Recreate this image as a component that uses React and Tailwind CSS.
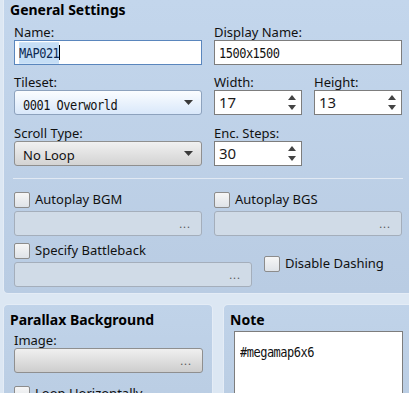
import React from "react";

const mono =
  "inline-block scale-y-[1.2] font-['DejaVu_Sans_Mono',monospace] text-[12px] tracking-[-0.5px]";

function Label({ children }) {
  return <div className="h-[16px] leading-[16px] text-[13px] text-[#111]">{children}</div>;
}

function TextInput({ children, focused }) {
  return (
    <div
      className={`h-[25px] bg-white border flex items-center px-[4px] ${
        focused ? "border-[#5a86bd]" : "border-[#7d7d7d]"
      }`}
    >
      {children}
    </div>
  );
}

function Combo({ children, blue }) {
  return (
    <div
      className={`h-[25px] rounded-[3px] border flex items-center pl-[8px] pr-[8px] ${
        blue
          ? "border-[#8da2bd] bg-gradient-to-b from-[#fbfdff] to-[#d9e8fa]"
          : "border-[#8f8f8f] bg-gradient-to-b from-[#f1f1f1] to-[#d3d3d3]"
      }`}
    >
      <div className="flex-1">{children}</div>
      <svg width="9" height="5" viewBox="0 0 9 5">
        <path d="M0 0H9L4.5 5Z" fill="#3a3a3a" />
      </svg>
    </div>
  );
}

function Spinner({ value }) {
  return (
    <div className="h-[25px] bg-white border border-[#7d7d7d] flex items-center pl-[4px] pr-[5px]">
      <div className="flex-1 text-[15px] text-[#1a1a1a] font-['Noto_Sans',sans-serif]">{value}</div>
      <div className="flex flex-col gap-[5px]">
        <svg width="8" height="5" viewBox="0 0 8 5">
          <path d="M4 0L8 5H0Z" fill="#444" />
        </svg>
        <svg width="8" height="5" viewBox="0 0 8 5">
          <path d="M0 0H8L4 5Z" fill="#444" />
        </svg>
      </div>
    </div>
  );
}

function DotsField({ gray }) {
  return (
    <div
      className={`h-[25px] rounded-[3px] border flex items-center justify-end pr-[10px] ${
        gray
          ? "border-[#8f8f8f] bg-gradient-to-b from-[#f0f0f0] to-[#cdcdcd]"
          : "border-[#a4aebb] bg-[#d0dbe7]"
      }`}
    >
      <span className="text-[11px] tracking-[1px] text-[#555] leading-none">...</span>
    </div>
  );
}

function Check({ label }) {
  return (
    <div className="flex items-center gap-[5px] h-[16px]">
      <div className="w-[16px] h-[16px] shrink-0 rounded-[2px] border border-[#8c8c8c] bg-gradient-to-b from-[#f6f6f6] to-[#dfe3e8]" />
      <span className="text-[13px] text-[#111] whitespace-nowrap">{label}</span>
    </div>
  );
}

export default function App() {
  return (
    <div className="w-[409px] h-[393px] overflow-hidden bg-[#dce7f3] font-['Noto_Sans',sans-serif]">
      {/* General Settings */}
      <div className="ml-[3px] w-[420px] h-[294px] border border-t-0 border-[#e4ecf6] rounded-b-[5px] bg-gradient-to-b from-[#c3d6ec] to-[#b9cce3]">
        <div className="pl-[6px] h-[20px] leading-[20px] text-[14px] font-bold text-black">General Settings</div>
        <div className="pl-[10px] pt-[4px] w-[398px]">
          <div className="grid grid-cols-[188px_188px] gap-x-[12px]">
            <div>
              <Label>Name:</Label>
              <TextInput focused>
                <span className={`${mono} bg-[#c5def6] text-[#0d2a52]`}>MAP021</span>
                <span className="w-[1px] h-[15px] bg-black" />
              </TextInput>
            </div>
            <div>
              <Label>Display Name:</Label>
              <TextInput>
                <span className={`${mono} text-[#111]`}>1500x1500</span>
              </TextInput>
            </div>

            <div className="mt-[9px]">
              <Label>Tileset:</Label>
              <Combo blue>
                <span className={`${mono} text-[#111]`}>0001 Overworld</span>
              </Combo>
            </div>
            <div className="mt-[9px] flex gap-[12px]">
              <div className="w-[88px]">
                <Label>Width:</Label>
                <Spinner value="17" />
              </div>
              <div className="w-[88px]">
                <Label>Height:</Label>
                <Spinner value="13" />
              </div>
            </div>

            <div className="mt-[10px]">
              <Label>Scroll Type:</Label>
              <Combo>
                <span className="text-[13px] text-[#111]">No Loop</span>
              </Combo>
            </div>
            <div className="mt-[10px]">
              <div className="w-[88px]">
                <Label>Enc. Steps:</Label>
                <Spinner value="30" />
              </div>
            </div>
          </div>

          <div className="-ml-[1px] w-[390px] h-[1px] bg-[#e1e9f3] mt-[12px]" />

          <div className="grid grid-cols-[188px_188px] gap-x-[12px] mt-[13px]">
            <div className="flex flex-col gap-[3px]">
              <Check label="Autoplay BGM" />
              <DotsField />
            </div>
            <div className="flex flex-col gap-[3px]">
              <Check label="Autoplay BGS" />
              <DotsField />
            </div>
          </div>

          <div className="flex gap-[12px] mt-[7px]">
            <div className="w-[238px] flex flex-col gap-[3px]">
              <Check label="Specify Battleback" />
              <DotsField />
            </div>
            <div className="pt-[13px]">
              <Check label="Disable Dashing" />
            </div>
          </div>
        </div>
      </div>

      {/* bottom panels */}
      <div className="flex gap-[10px] ml-[3px] mt-[10px] w-[430px]">
        <div className="w-[210px] shrink-0 h-[120px] border border-b-0 border-[#e4ecf6] rounded-t-[5px] bg-gradient-to-b from-[#c0d3e9] to-[#b9cce2]">
          <div className="pl-[6px] pt-[5px] h-[25px] leading-[20px] text-[14px] font-bold text-black">Parallax Background</div>
          <div className="pl-[10px] pr-[9px] pt-[2px]">
            <Label>Image:</Label>
            <DotsField gray />
            <div className="mt-[13px]">
              <Check label="Loop Horizontally" />
            </div>
          </div>
        </div>
        <div className="w-[200px] shrink-0 h-[120px] border border-b-0 border-[#e4ecf6] rounded-t-[5px] bg-gradient-to-b from-[#c0d3e9] to-[#b9cce2]">
          <div className="pl-[6px] pt-[5px] h-[26px] leading-[20px] text-[14px] font-bold text-black">Note</div>
          <div className="ml-[10px] w-[169px] h-[80px] bg-white border border-[#7d7d7d] px-[5px] pt-[6px]">
            <span className={`${mono} text-[#111]`}>#megamap6x6</span>
          </div>
        </div>
      </div>
    </div>
  );
}
